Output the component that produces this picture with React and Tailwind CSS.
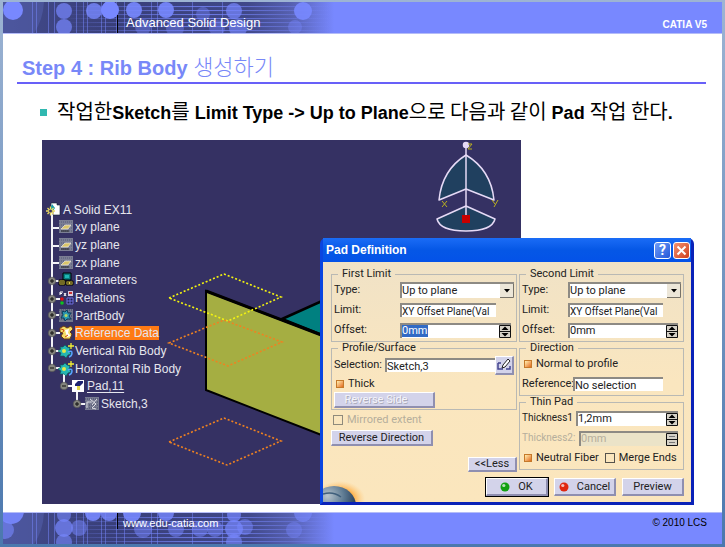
import React, { useId } from "react";

const LATIN = "font-['Liberation_Sans','Noto_Sans_CJK_KR',sans-serif]";
const KOREAN = "font-['Noto_Sans_CJK_KR',sans-serif]";

const headerDots = [
  [10, 8, 10, 1], [61, 9, 8, 0.7], [61, 25, 8, 0.7], [91, 9, 8, 0.8], [107, 8, 9, 1],
  [131, 8, 8, 0.9], [163, 8, 8, 0.9], [140, 25, 8, 0.4], [200, 12, 7, 0.4], [231, 9, 8, 0.7],
  [172, 26, 9, 0.4], [235, 26, 9, 0.6], [214, 26, 8, 0.4], [300, 9, 9, 0.9], [292, 25, 7, 0.4],
];

const footerDots = [
  [8, -2, 13, 0.9], [2, 17, 9, 0.6], [61, 2, 7, 0.6], [61, 15, 9, 0.7], [61, 29, 8, 0.6],
  [76, 15, 8, 0.5], [90, 0, 8, 0.9], [106, 0, 8, 0.8], [129, 0, 9, 0.9], [163, 0, 8, 0.8],
  [140, 16, 9, 0.5], [173, 16, 8, 0.5], [197, 16, 8, 0.5], [212, 16, 8, 0.5], [231, 2, 7, 0.7],
  [231, 16, 9, 0.7], [231, 29, 8, 0.6], [242, 14, 8, 0.5], [300, 0, 9, 0.6], [291, 17, 8, 0.4],
];

function BandArt({ dots }) {
  const id = useId();
  return (
    <svg className="col-start-1 row-start-1 block" width="360" height="31" viewBox="0 0 360 31" aria-hidden="true">
      <defs>
        <linearGradient id={id + "f"} x1="0" x2="1" y1="0" y2="0">
          <stop offset="0" stopColor="#434b8c" />
          <stop offset="0.3" stopColor="#383e78" />
          <stop offset="0.68" stopColor="#404889" />
          <stop offset="0.8" stopColor="#5660b0" />
          <stop offset="0.92" stopColor="#7888ff" />
        </linearGradient>
        <linearGradient id={id + "s"} x1="0" x2="1" y1="0" y2="0">
          <stop offset="0" stopColor="#7888ff" stopOpacity="0" />
          <stop offset="0.5" stopColor="#7888ff" stopOpacity="0.8" />
          <stop offset="1" stopColor="#7888ff" stopOpacity="0" />
        </linearGradient>
      </defs>
      <rect width="360" height="31" fill={"url(#" + id + "f)"} />
      <path d="M0 0H41Q40 18 31 31H0Z" fill="#5561b0" opacity="0.5" />
      <path d="M29.500 0V31M33.500 0V31M45.500 0V31M51.500 0V31M73.500 0V31M80.500 0V31M84.500 0V31M98.500 0V31M102.500 0V31M113.500 0V31M121.500 0V31M148.500 0V31M154.500 0V31M189.500 0V31M219.500 0V31" stroke="#7888ff" opacity="0.5" />
      <path d="M60 4.500H340V4.600H60ZM60 8.500H340V8.600H60ZM60 12.500H340V12.600H60ZM60 16.500H340V16.600H60ZM60 20.500H340V20.600H60ZM60 24.500H340V24.600H60ZM60 28.500H340V28.600H60Z" fill="none" stroke={"url(#" + id + "s)"} strokeOpacity="0.7" />
      {dots.map(([x, y, r, o]) => (
        <circle key={x + "-" + y} cx={x} cy={y} r={r} fill="#7888ff" opacity={o} />
      ))}
    </svg>
  );
}

function Scene() {
  const nodes = [[10, 141], [10, 159], [10, 175], [10, 193], [10, 211], [10, 228], [22, 246], [35, 264]];
  return (
    <svg className="col-start-1 row-start-1 block" width="479" height="364" viewBox="0 0 479 364" aria-hidden="true">
      <rect width="479" height="364" fill="#353163" />
      <path d="M240 179L280 161V195Z" fill="#008080" stroke="#000" strokeWidth="2.500" />
      <path d="M164 151L282 196V296L164 250Z" fill="#a5ae42" stroke="#000" strokeWidth="2" />
      <path d="M164 151L282 196" stroke="#000" strokeWidth="3" />
      <g fill="none" strokeWidth="1.600" strokeDasharray="2 2">
        <path d="M127 158L182 134L239 157L186 181Z" stroke="#f4f410" />
        <path d="M127 203L182 180L240 202L186 226Z" stroke="#f08220" />
        <path d="M127 302L182 278L239 301L185 325Z" stroke="#f08220" />
      </g>
      <g fill="#20405f" stroke="#e6daf6" strokeWidth="1.500" strokeLinejoin="round">
        <path d="M424 15Q400 30 397 60L424 49L452 60Q449 30 424 15Z" />
        <path d="M424 66L395 79Q398 91 424 91Q450 91 453 79Z" />
        <path d="M424 6V78" />
        <circle cx="424" cy="5" r="2.500" fill="#e6daf6" />
      </g>
      <path d="M420 75h8v8h-8z" fill="#c80000" />
      <path d="M400 61L405 67M405 61L400 67M450 60L453 64M456 60L452 67M426 4H430L426 9H430" fill="none" stroke="#b9b020" />
      <path d="M10 72V228M10 88H18M10 106H18M10 123H18M10 141H18M10 159H18M10 175H18M10 193H18M10 211H18M10 228H18M22 234V246H31M35 250V264H43" stroke="#f2f2f6" strokeWidth="2" fill="none" />
      {nodes.map(([x, y]) => (
        <g key={y}>
          <circle cx={x} cy={y} r="3.800" fill="#85857f" stroke="#4a4a4c" strokeWidth="0.600" />
          <path d={"M" + (x - 2) + " " + y + "h4" + (y === 228 || y === 246 ? "" : "M" + x + " " + (y - 2) + "v4")} stroke="#111" />
        </g>
      ))}
    </svg>
  );
}

function TreeIcon({ kind }) {
  const art = {
    root: (
      <>
        <path d="M5 1h6v2h3v10H7V9H5z" fill="#fff" stroke="#123" strokeWidth="0.600" />
        <path d="M6 2L9 6L7 9L4 7Z" fill="#159aa5" />
        <path d="M4.500 4.500V13.500M0 9H9M1.500 6L7.500 12M7.500 6L1.500 12" stroke="#eedc60" strokeWidth="1.300" />
        <circle cx="4.500" cy="9" r="1.500" fill="#353163" />
      </>
    ),
    plane: (
      <>
        <path d="M1 1h14v13H1z" fill="#7b7f94" />
        <path d="M1 3h14M1 6h14M1 9h14M1 12h14" stroke="#555a78" strokeDasharray="1 1" />
        <path d="M3 10L7 6H13L10 10Z" fill="#d9c56a" stroke="#e8e8e8" strokeWidth="0.700" />
        <path d="M3 12H11" stroke="#222" />
      </>
    ),
    params: (
      <>
        <path d="M5 1h8v7H5z" fill="#087f80" stroke="#000" />
        <path d="M7 3h4v3H7z" fill="#20b7b5" />
        <path d="M1 8h6v5H1zM8 9h7v4H8z" fill="#e3d34a" stroke="#000" />
        <path d="M3 9v3M5 9v3M10 10v2M13 10v2" stroke="#000" />
      </>
    ),
    relations: (
      <>
        <path d="M2 5V2H5M2 3.500H4M6 3L8 6M8 3L6 6" stroke="#fff" fill="none" />
        <path d="M10 1h5v5h-5z" fill="#d7c9dc" />
        <path d="M11 2h3v2h-3z" fill="#c33" />
        <circle cx="4" cy="9" r="1.800" fill="#e01010" />
        <circle cx="4" cy="13" r="1.800" fill="#10c020" />
        <path d="M9 8h6v6H9z" fill="#20204a" stroke="#6f6fe0" />
        <path d="M9 11h6M12 8v6" stroke="#6f6fe0" />
      </>
    ),
    part: (
      <>
        <path d="M1 1h14v13H1z" fill="#70768c" />
        <path d="M1 2h14M1 5h14M1 8h14M1 11h14" stroke="#3a4060" strokeDasharray="1 1" />
        <path d="M4 3L7 4L9 2L10 5L13 5L11 8L13 11L9 11L7 13L6 10L3 10L5 7Z" fill="#2e9ab0" stroke="#0c3d60" />
        <circle cx="8" cy="7.500" r="1.500" fill="#b9d860" />
      </>
    ),
    reference: (
      <>
        <path d="M2 3L6 1L9 3L13 1L15 4L12 7L14 9L12 14L6 14L3 11L5 8L2 7Z" fill="#f3dc66" stroke="#6c3a12" />
        <path d="M7 5L11 4L10 8L13 11L9 12Z" fill="#fff" />
        <path d="M3 4L6 5L5 7M7 12L10 10" stroke="#cc4411" fill="none" />
      </>
    ),
    body: (
      <>
        <path d="M2 4L5 4L7 2L9 4L12 5L11 8L13 11L10 12L8 15L6 13L2 13L3 10L0 8L3 6Z" fill="#25b6b3" stroke="#075a57" strokeWidth="0.600" />
        <circle cx="6" cy="8" r="2" fill="#e2e94a" />
        <path d="M10 9q4-2 4 1t-3 4" stroke="#58a4ff" fill="none" strokeWidth="1.500" />
        <path d="M13 0v6M10 3h6" stroke="#f4ef32" strokeWidth="1.300" />
      </>
    ),
    pad: (
      <>
        <path d="M2 2h12v12H2z" fill="#fff" />
        <path d="M5 6L8 3H13V5L10 8V12H7V8H5z" fill="#1d2270" />
        <path d="M7 8h3v4H7z" fill="#e4d749" />
      </>
    ),
    sketch: (
      <>
        <path d="M1 1h14v13H1z" fill="#777a90" />
        <path d="M1 3h14M1 6h14M1 9h14M1 12h14" stroke="#444a68" strokeDasharray="1 1" />
        <path d="M3 12V6H8M6 3L12 8L8 12L12 13M13 3L8 9" fill="none" stroke="#dfdfe4" />
      </>
    ),
  };
  return (
    <svg className="shrink-0" width="16" height="16" viewBox="0 0 16 16" aria-hidden="true">
      {art[kind]}
    </svg>
  );
}

const tree = [
  { label: "A Solid EX11", kind: "root", pad: "pl-1" },
  { label: "xy plane", kind: "plane", pad: "pl-4" },
  { label: "yz plane", kind: "plane", pad: "pl-4" },
  { label: "zx plane", kind: "plane", pad: "pl-4" },
  { label: "Parameters", kind: "params", pad: "pl-4" },
  { label: "Relations", kind: "relations", pad: "pl-4" },
  { label: "PartBody", kind: "part", pad: "pl-4" },
  { label: "Reference Data", kind: "reference", pad: "pl-4", tone: "bg-[#ff7a14]" },
  { label: "Vertical Rib Body", kind: "body", pad: "pl-4" },
  { label: "Horizontal Rib Body", kind: "body", pad: "pl-4" },
  { label: "Pad,11", kind: "pad", pad: "pl-7", tone: "underline underline-offset-2" },
  { label: "Sketch,3", kind: "sketch", pad: "pl-[42px]" },
];

const SUNKEN = "border-t-2 border-l-2 border-t-[#8d8a84] border-l-[#8d8a84]";

function Group({ title, children }) {
  return (
    <fieldset className="min-w-0 border border-[#b9b9b4] px-0.5 pb-px">
      <legend className="ml-1 h-3 px-1 leading-3">{title}</legend>
      {children}
    </fieldset>
  );
}

function TypeRow({ id }) {
  return (
    <div className="flex h-5 items-center">
      <label htmlFor={id} className="w-[66px] shrink-0 whitespace-nowrap group-data-[side=right]:w-[46px]">Type:</label>
      <div className={"flex h-4 min-w-0 flex-1 bg-white " + SUNKEN}>
        <select id={id} className="min-w-0 flex-1 appearance-none bg-white leading-3 outline-none">
          <option>Up to plane</option>
        </select>
        <svg width="14" height="14" viewBox="0 0 14 14" className="shrink-0 bg-[#ece6d8]" aria-hidden="true">
          <path d="M0 13.500H13.500V0" fill="none" stroke="#77736a" />
          <path d="M4 5h6L7 8.500z" fill="#000" />
        </svg>
      </div>
    </div>
  );
}

function LimitRow({ id }) {
  return (
    <div className="flex h-5 items-center pr-[18px]">
      <label htmlFor={id} className="w-[66px] shrink-0 group-data-[side=right]:w-[46px]">Limit:</label>
      <input id={id} readOnly defaultValue="XY Offset Plane(Val" className={"h-3.5 min-w-0 flex-1 bg-white text-[10px] leading-3 outline-none " + SUNKEN} />
    </div>
  );
}

function Spinner({ id, label, labelClass, value, disabled, selected }) {
  return (
    <div className="flex h-5 items-center pr-[3px]">
      <label htmlFor={id} className={"shrink-0 whitespace-nowrap " + labelClass + (disabled ? " text-[#b5ae9c]" : "")}>{label}</label>
      <div className={"flex h-[15px] min-w-0 flex-1 " + SUNKEN + (disabled ? " bg-[#ebe3c8]" : " bg-white")}>
        <div className="flex min-w-0 flex-1">
          <input
            id={id}
            readOnly
            disabled={disabled}
            defaultValue={value}
            className={
              "h-3 leading-3 outline-none " +
              (selected ? "w-[26px] bg-[#316ac5] text-white" : "w-full min-w-0 bg-transparent") +
              (disabled ? " text-[#b5ae9c]" : "")
            }
          />
        </div>
        <svg width="12" height="13" viewBox="0 0 12 13" className="shrink-0" aria-hidden="true">
          <path d="M0.500 0.500h11v12h-11zM0.500 6.500h11" fill="#d6d2c8" stroke="#111" />
          {disabled ? <path d="M3 3.500h6M3 9.500h6" stroke="#777" /> : <path d="M2.500 5h7L6 1.500zM2.500 8h7L6 11.500z" fill="#000" />}
        </svg>
      </div>
    </div>
  );
}

function Tick({ id, label, checked, disabled }) {
  return (
    <div className="flex items-center gap-1 whitespace-nowrap">
      <input
        id={id}
        type="checkbox"
        defaultChecked={checked}
        disabled={disabled}
        className="size-2.5 shrink-0 appearance-none border border-[#55524c] checked:size-2 checked:border-[#c5792a] checked:bg-linear-to-br checked:from-[#fff0b0] checked:to-[#e06a10] disabled:border-[#8f8a7c]"
      />
      <label htmlFor={id} className={disabled ? "text-[#b5ae9c]" : ""}>{label}</label>
    </div>
  );
}

function PushButton({ className, children, ...rest }) {
  return (
    <button
      type="button"
      className={
        "flex items-center justify-center gap-2 border-t border-l border-r-2 border-b-2 border-t-white border-l-white border-r-[#8f8fb0] border-b-[#8f8fb0] bg-[#d3d3ea] leading-3 whitespace-nowrap " +
        className
      }
      {...rest}
    >
      {children}
    </button>
  );
}

function Led({ color }) {
  return (
    <svg width="10" height="10" viewBox="0 0 10 10" aria-hidden="true">
      <circle cx="5" cy="5" r="4.500" fill={color} />
      <circle cx="3.800" cy="3.500" r="1.600" fill="#fff" opacity="0.700" />
    </svg>
  );
}

function PadDialog() {
  return (
    <section aria-label="Pad Definition" className="absolute top-[98px] left-[278px] flex w-[374px] flex-col rounded-t-md border-[3px] border-t-0 border-[#0a45e0] border-r-[#0a22b8] border-b-[#0a22b8] bg-[#fbe6bf] font-['Roboto','Liberation_Sans',sans-serif] text-[11px] leading-3 text-[#222]">
      <header className="flex h-6 items-center justify-between bg-linear-to-b from-[#1a6cf6] via-[#0557e6] to-[#0452e8] pr-px pl-[3px]">
        <h2 className="font-['Liberation_Sans',sans-serif] text-xs font-bold text-white">Pad Definition</h2>
        <div className="flex gap-0.5">
          <button type="button" aria-label="Help" className="size-[17px] rounded-[3px] border border-white bg-linear-to-br from-[#6f9bf8] to-[#2456d8] text-sm leading-3 font-bold text-white">?</button>
          <button type="button" aria-label="Close" className="flex size-[17px] items-center justify-center rounded-[3px] border border-white bg-linear-to-br from-[#f09070] to-[#d03c14]">
            <svg width="11" height="11" viewBox="0 0 11 11" aria-hidden="true"><path d="M1.500 1.500L9.500 9.500M9.500 1.500L1.500 9.500" stroke="#fff" strokeWidth="2" /></svg>
          </button>
        </div>
      </header>
      <div className="grid grid-cols-1 grid-rows-1 bg-linear-to-b from-[#f0e2c6] via-[#fae6bf] to-[#fbe6bd]">
        <svg width="42" height="30" viewBox="0 0 42 30" className="col-start-1 row-start-1 self-end" aria-hidden="true">
          <defs>
            <radialGradient id="glow" cx="0.400" cy="0.900" r="0.600">
              <stop offset="0.500" stopColor="#ffa838" />
              <stop offset="1" stopColor="#ffc878" stopOpacity="0" />
            </radialGradient>
            <radialGradient id="globe" cx="0.350" cy="0.250" r="0.750">
              <stop offset="0" stopColor="#b8c4cc" />
              <stop offset="0.500" stopColor="#5d7a92" />
              <stop offset="1" stopColor="#182c48" />
            </radialGradient>
          </defs>
          <rect width="42" height="30" fill="url(#glow)" />
          <ellipse cx="11" cy="34" rx="22" ry="20" fill="url(#globe)" />
          <path d="M0 22Q10 19 18 25" stroke="#3f5f7c" strokeWidth="1.500" fill="none" />
        </svg>
        <div className="col-start-1 row-start-1 py-1.5 pr-[7px] pl-2">
          <div className="grid grid-cols-[186px_minmax(0,1fr)] gap-0.5">
            <div className="group flex flex-col" data-side="left">
              <Group title="First Limit">
                <TypeRow id="type-1" />
                <LimitRow id="limit-1" />
                <Spinner id="offset-1" label="Offset:" labelClass="w-[66px]" value="0mm" selected />
              </Group>
              <Group title="Profile/Surface">
                <div className="flex h-[22px] items-center">
                  <label htmlFor="selection" className="w-[51px] shrink-0">Selection:</label>
                  <input id="selection" readOnly defaultValue="Sketch,3" className={"h-3.5 min-w-0 flex-1 bg-white leading-3 outline-none " + SUNKEN} />
                  <PushButton className="size-[19px]" aria-label="Edit sketch">
                    <svg className="shrink-0" width="15" height="15" viewBox="0 0 15 15" aria-hidden="true">
                      <path d="M1 6H4M1 6V12H6M9 12H13V9" fill="none" stroke="#444690" strokeWidth="1.500" />
                      <path d="M5 11L6 8L11 2L13 4L8 10Z" fill="#fff" stroke="#222" />
                    </svg>
                  </PushButton>
                </div>
                <div className="flex h-4 items-center pl-0.5"><Tick id="thick" label="Thick" checked /></div>
                <PushButton className="h-4 w-[101px] pr-4 text-[#f4f4fa] [text-shadow:1px_1px_0_#a9a9b8]" disabled>Reverse Side</PushButton>
              </Group>
              <div className="flex h-5 items-center pl-0.5"><Tick id="mirrored" label="Mirrored extent" disabled /></div>
              <PushButton className="h-4 w-[102px]">Reverse Direction</PushButton>
              <PushButton className="mt-[11px] h-[15px] w-[49px] self-end">&lt;&lt;Less</PushButton>
            </div>
            <div className="group flex flex-col" data-side="right">
              <Group title="Second Limit">
                <TypeRow id="type-2" />
                <LimitRow id="limit-2" />
                <Spinner id="offset-2" label="Offset:" labelClass="w-[46px]" value="0mm" />
              </Group>
              <Group title="Direction">
                <div className="flex h-5 items-center pl-0.5"><Tick id="normal" label="Normal to profile" checked /></div>
                <div className="flex h-5 items-center pr-[18px]">
                  <label htmlFor="reference" className="w-[51px] shrink-0">Reference:</label>
                  <input id="reference" readOnly defaultValue="No selection" className={"h-3.5 min-w-0 flex-1 bg-white leading-3 outline-none " + SUNKEN} />
                </div>
              </Group>
              <Group title="Thin Pad">
                <Spinner id="thickness-1" label="Thickness1" labelClass="w-[54px] text-[10px]" value="1,2mm" />
                <Spinner id="thickness-2" label="Thickness2:" labelClass="w-[57px] text-[10px]" value="0mm" disabled />
                <div className="flex h-5 items-center gap-1.5 pl-0.5">
                  <Tick id="neutral" label="Neutral Fiber" checked />
                  <Tick id="merge" label="Merge Ends" />
                </div>
              </Group>
            </div>
          </div>
          <div className="flex justify-end gap-1.5 pt-1.5">
            <PushButton className="h-[18px] w-[62px] outline outline-black"><Led color="#12a012" />OK</PushButton>
            <PushButton className="h-[18px] w-[62px]"><Led color="#e02810" />Cancel</PushButton>
            <PushButton className="h-[18px] w-[62px]">Preview</PushButton>
          </div>
        </div>
      </div>
    </section>
  );
}

export default function App() {
  return (
    <div className={"min-h-screen bg-linear-to-b from-[#9db4d3] to-[#4b78ae] px-[3px] pt-0.5 pb-[3px] " + LATIN}>
      <div className="flex min-h-[542px] flex-col bg-white">
        <header className="grid h-8 grid-cols-1 border-b border-[#b4bcf8] bg-[#7888ff]">
          <BandArt dots={headerDots} />
          <div className="col-start-1 row-start-1 flex items-end justify-between pr-[15px] pl-[114px] text-white">
            <p className="border-l border-black pb-0.5 pl-2 text-[13px] leading-4">Advanced Solid Design</p>
            <p className="pb-0.5 text-[10px] leading-3 font-bold">CATIA V5</p>
          </div>
        </header>
        <main className="flex-1">
          <h1 className="mr-4 ml-3.5 h-[50px] border-b-2 border-[#6860f8] pt-[19px] pl-[5px] text-[20px] leading-6 font-bold whitespace-nowrap text-[#7888f8]">
            Step 4 : Rib Body <span className={KOREAN + " text-[22px] leading-6 font-light"}>생성하기</span>
          </h1>
          <div className="flex h-14 items-center gap-2.5 pl-[37px] text-[18px] font-bold whitespace-nowrap text-black">
            <span className="size-[7px] bg-[#30b8b0]" />
            <p className="leading-6">
              <span className={KOREAN + " text-[20px] font-normal"}>작업한</span>Sketch<span className={KOREAN + " text-[20px] font-normal"}>를</span> Limit Type -&gt; Up to Plane<span className={KOREAN + " text-[20px] font-normal"}>으로 다음과 같이</span> Pad <span className={KOREAN + " text-[20px] font-normal"}>작업 한다</span>.
            </p>
          </div>
          <div className="relative ml-[39px] grid w-[479px] grid-cols-1">
            <Scene />
            <ul className="col-start-1 row-start-1 mt-[61px] grid h-[212px] grid-rows-12 self-start text-xs text-[#e6e6ee]">
              {tree.map((n) => (
                <li key={n.label} className={"flex items-center gap-px " + n.pad}>
                  <TreeIcon kind={n.kind} />
                  <span className={"leading-[14px] " + (n.tone || "")}>{n.label}</span>
                </li>
              ))}
            </ul>
            <PadDialog />
          </div>
        </main>
        <footer className="grid h-8 grid-cols-1 border-t border-[#b4bcf8] bg-[#7888ff]">
          <BandArt dots={footerDots} />
          <div className="col-start-1 row-start-1 flex items-start justify-between pr-[15px] pl-[114px] text-[11px]">
            <a href="http://www.edu-catia.com" className="h-4 border-l border-black pt-0.5 pl-[5px] leading-4 text-white">www.edu-catia.com</a>
            <p className="pt-0.5 text-[10px] leading-4 text-black">© 2010 LCS</p>
          </div>
        </footer>
      </div>
    </div>
  );
}
